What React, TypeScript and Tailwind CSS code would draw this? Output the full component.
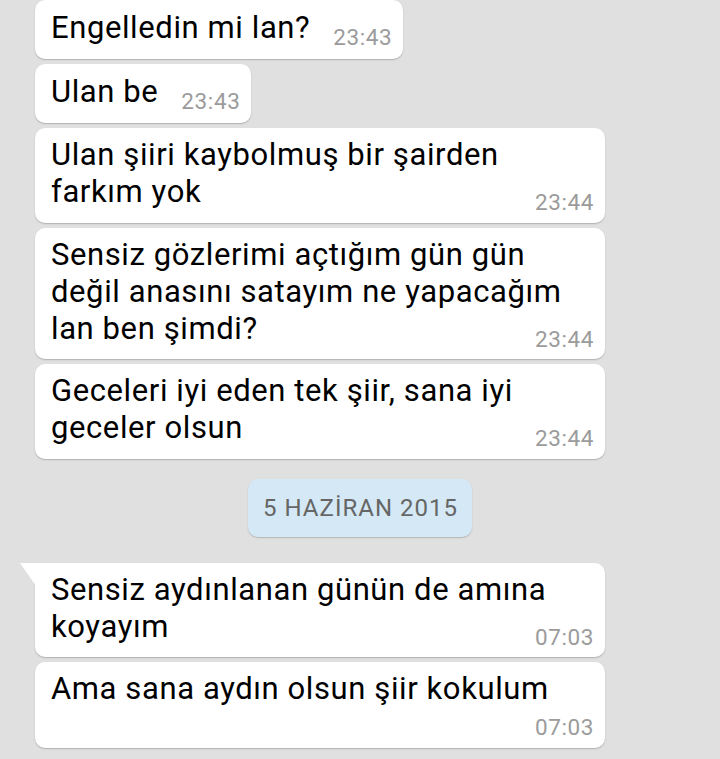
import React from "react";

type Msg = {
  lines: string[];
  time: string;
  mode: "inline" | "overlap" | "below";
  tail?: boolean;
};

const before: Msg[] = [
  { lines: ["Engelledin mi lan?"], time: "23:43", mode: "inline" },
  { lines: ["Ulan be"], time: "23:43", mode: "inline" },
  { lines: ["Ulan şiiri kaybolmuş bir şairden", "farkım yok"], time: "23:44", mode: "overlap" },
  {
    lines: ["Sensiz gözlerimi açtığım gün gün", "değil anasını satayım ne yapacağım", "lan ben şimdi?"],
    time: "23:44",
    mode: "overlap",
  },
  { lines: ["Geceleri iyi eden tek şiir, sana iyi", "geceler olsun"], time: "23:44", mode: "overlap" },
];

const after: Msg[] = [
  { lines: ["Sensiz aydınlanan günün de amına", "koyayım"], time: "07:03", mode: "overlap", tail: true },
  { lines: ["Ama sana aydın olsun şiir kokulum"], time: "07:03", mode: "below" },
];

const textCls = "text-[31px] leading-[37px] tracking-[0.6px] text-black whitespace-nowrap";
const timeCls = "text-[22.5px] leading-[26px] tracking-[0.6px] text-[#9b9b9b] whitespace-nowrap";

function Bubble({ m }: { m: Msg }) {
  const shadow = "shadow-[0_1px_1.5px_rgba(0,0,0,0.22)]";
  if (m.mode === "inline") {
    return (
      <div
        className={`self-start ml-[35px] bg-white rounded-[10px] ${shadow} pt-[9px] pb-[9px] pl-4 pr-[11px] flex items-start`}
      >
        <span className={textCls}>{m.lines[0]}</span>
        <span className={`ml-[23px] mt-[15px] ${timeCls}`}>{m.time}</span>
      </div>
    );
  }
  return (
    <div
      className={`relative ml-[35px] w-[570px] bg-white ${m.tail ? "rounded-[10px] rounded-tl-none" : "rounded-[10px]"} ${shadow} pt-2 pb-[7.5px] pl-4 pr-[11px]`}
    >
      {m.tail && (
        <svg className="absolute left-[-15px] top-0" width="16" height="24" viewBox="0 0 16 24">
          <polygon points="0,0 16,0 16,23" fill="#ffffff" />
        </svg>
      )}
      <div className={textCls}>
        {m.lines.map((l, i) => (
          <div key={i}>{l}</div>
        ))}
      </div>
      <div className={`${m.mode === "overlap" ? "mt-[-21px]" : "mt-[7px]"} text-right ${timeCls}`}>
        {m.time}
      </div>
    </div>
  );
}

export default function App() {
  return (
    <div
      className="w-[720px] h-[759px] overflow-hidden bg-[#e0e0e0] flex flex-col"
      style={{ fontFamily: "Roboto, 'Noto Sans', sans-serif" }}
    >
      <div className="flex flex-col gap-[5px]">
        {before.map((m, i) => (
          <Bubble key={i} m={m} />
        ))}
      </div>
      <div className="flex justify-center mt-5 mb-[26px]">
        <div className="h-[58px] pl-[15px] pr-[14px] flex items-center rounded-[10px] bg-[#d4e9f5] shadow-[0_1px_1.5px_rgba(0,0,0,0.2)] text-[24px] leading-[28px] tracking-[1px] text-[#666666]">
          5 HAZİRAN 2015
        </div>
      </div>
      <div className="flex flex-col gap-[5px]">
        {after.map((m, i) => (
          <Bubble key={i} m={m} />
        ))}
      </div>
    </div>
  );
}
